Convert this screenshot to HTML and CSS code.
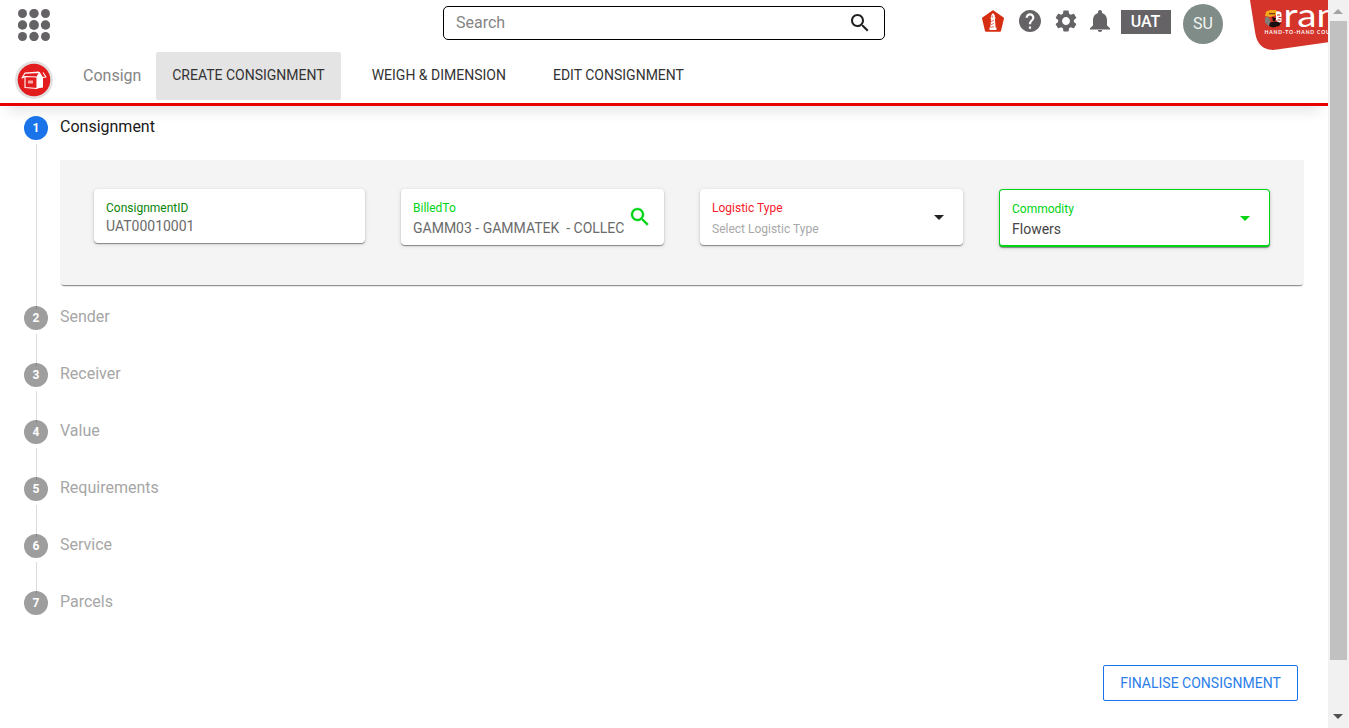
FILE: index.html
```html
<!DOCTYPE html>
<html lang="en">
<head>
<meta charset="utf-8">
<title>Create Consignment</title>
<link rel="stylesheet" href="styles.css">
</head>
<body>
<div class="app">
  <div class="page">
    <header class="header">
      <div class="topbar">
        <svg class="apps" viewBox="0 0 32 32"><g fill="#656366"><circle cx="4.5" cy="4.5" r="4.5"/><circle cx="16" cy="4.5" r="4.7"/><circle cx="27.5" cy="4.5" r="4.5"/><circle cx="4.5" cy="16" r="4.7"/><circle cx="16" cy="16" r="4.9"/><circle cx="27.5" cy="16" r="4.7"/><circle cx="4.5" cy="27.5" r="4.5"/><circle cx="16" cy="27.5" r="4.7"/><circle cx="27.5" cy="27.5" r="4.5"/></g></svg>
        <div class="search">
          <span class="search-text">Search</span>
          <svg class="icon24" viewBox="0 0 24 24"><path fill="#212121" d="M15.5 14h-.79l-.28-.27C15.41 12.59 16 11.11 16 9.5 16 5.91 13.09 3 9.5 3S3 5.91 3 9.5 5.91 16 9.5 16c1.61 0 3.09-.59 4.23-1.57l.27.28v.79l5 4.99L20.49 19l-4.99-5zm-6 0C7.01 14 5 11.99 5 9.5S7.01 5 9.5 5 14 7.01 14 9.5 11.99 14 9.5 14z"/></svg>
        </div>
        <div class="tools">
          <svg class="tool" viewBox="0 0 22 22"><path fill="#d62e12" stroke="#d62e12" stroke-width="2" stroke-linejoin="round" d="M11 1.2 21 8.3 18 20.8H4L1 8.3z"/><path fill="#fff" d="M9.2 5.2 11 3l1.8 2.2v2.3h.7v1.2h-.6l.7 8.800h.9V20H7.500v-2.500h.9l.7-8.800h-.6V7.500h.7z"/><path stroke="#d62e12" stroke-width=".7" fill="none" d="M10.300 5.500v2M9 11.500l3-1M9 14.500l3-1M9 17.500l3-1"/></svg>
          <svg class="tool" viewBox="2 2 20 20"><path fill="#656366" d="M12 2C6.480 2 2 6.480 2 12s4.480 10 10 10 10-4.480 10-10S17.520 2 12 2zm1 17h-2v-2h2v2zm2.070-7.750-.9.920C13.450 12.900 13 13.500 13 15h-2v-.5c0-1.100.45-2.100 1.170-2.830l1.240-1.260c.37-.36.590-.86.590-1.410 0-1.100-.9-2-2-2s-2 .9-2 2H8c0-2.210 1.790-4 4-4s4 1.790 4 4c0 .88-.36 1.680-.93 2.250z"/></svg>
          <svg class="tool gear" viewBox="2 2 20 20"><path fill="#656366" d="M19.140 12.940c.04-.3.060-.61.060-.94 0-.32-.02-.64-.07-.94l2.030-1.580c.18-.14.230-.41.120-.61l-1.920-3.320c-.12-.22-.37-.29-.59-.22l-2.390.960c-.5-.38-1.030-.7-1.620-.94l-.36-2.540c-.04-.24-.24-.41-.48-.41h-3.840c-.24 0-.43.170-.47.410l-.36 2.540c-.59.240-1.130.570-1.620.94l-2.390-.96c-.22-.08-.47 0-.59.220L2.740 8.870c-.12.210-.08.470.12.610l2.030 1.580c-.05.300-.09.630-.09.940s.02.640.07.940l-2.030 1.580c-.18.140-.23.410-.12.610l1.920 3.320c.12.220.37.290.59.220l2.390-.96c.5.380 1.030.7 1.620.94l.36 2.540c.05.240.24.410.48.410h3.840c.24 0 .44-.17.47-.41l.36-2.540c.59-.24 1.130-.56 1.620-.94l2.390.96c.22.080.47 0 .59-.22l1.920-3.320c.12-.22.070-.47-.12-.61l-2.010-1.580zM12 15.600c-1.980 0-3.600-1.620-3.600-3.600s1.620-3.600 3.600-3.600 3.600 1.620 3.600 3.600-1.620 3.600-3.600 3.600z"/></svg>
          <svg class="tool bell" viewBox="0 0 22 22"><path fill="#656366" d="M11 22a2.300 2.300 0 0 0 2.300-2H8.700a2.300 2.300 0 0 0 2.300 2zm7-6.500V9.800c0-3.500-1.900-6.100-5-6.900V1.900C13 .8 12.100 0 11 0S9 .8 9 1.900v1c-3.100.8-5 3.400-5 6.900v5.700L1 18.200v1.300h20v-1.300z"/></svg>
        </div>
        <span class="env">UAT</span>
        <span class="avatar">SU</span>
        <svg class="brand" viewBox="0 0 78 52">
          <path fill="#d4342a" d="M0 0h78v42.300L27 49.500C15 51.500 7 45.500 5.200 33z"/>
          <path fill="#f3a71a" d="M16 11.500 20 10h6l1 2v3l-4 1-3 1-5-1z"/><path fill="#7b3a15" d="M19 13h6v1.300h-6z"/>
          <path fill="#fff" d="M26 11.500q5.500-1 5.500 3v7l-2.500 1.500-3-3z"/><path stroke="#b9241b" d="M27 15h3M28.500 17.500h3M27.500 20h3"/>
          <path fill="#817d79" d="M15 17.500l3-1 2 3 1 4-2 3-4-4z"/>
          <path fill="#17100e" d="M20 22.500l4-1 4 .5 3 1-2 3-6 1.500-4-1.500zM22 17l4 1-1 3h-2z"/>
          <text class="brand-name" x="33.500" y="27" textLength="65" lengthAdjust="spacingAndGlyphs">ram</text>
          <text class="brand-tag" x="14.500" y="34" textLength="83">HAND-TO-HAND COURIERS</text>
        </svg>
      </div>
      <nav class="nav">
        <svg class="module" viewBox="0 0 38 38"><circle cx="19" cy="19" r="19" fill="#e1e1e1"/><circle cx="19" cy="19" r="16.300" fill="#e31d1d"/><path fill="none" stroke="#fff" stroke-width="1.100" stroke-linejoin="round" d="M10 17v9.500l12 1V16L10 15.500v2M10 15.500 7 17l3-5 14-1M22 16l2.500-4.500-14 .8M28 11.500l3 4.500-3.500.5"/><path fill="#fff" d="M22 16l3-4.500 3 4.800v10.200l-6 1z"/><path fill="#f7a9a6" d="M13 19.500h5v3h-5z"/></svg>
        <span class="module-name">Consign</span>
        <a class="tab active">CREATE CONSIGNMENT</a>
        <a class="tab">WEIGH &amp; DIMENSION</a>
        <a class="tab">EDIT CONSIGNMENT</a>
      </nav>
    </header>
    <main class="stepper">
      <section class="step current">
        <div class="rail"><span class="num">1</span><i class="line"></i></div>
        <div class="content">
          <h2 class="label">Consignment</h2>
          <div class="panel">
            <div class="field wide short"><div class="field-body"><span class="caption dark-green">ConsignmentID</span><span class="value">UAT00010001</span></div></div>
            <div class="field"><div class="field-body"><span class="caption green">BilledTo</span><span class="value">GAMM03 - GAMMATEK&nbsp; - COLLEC</span></div>
              <svg class="icon24 lookup" viewBox="0 0 24 24"><path fill="#00d415" stroke="#00d415" stroke-width=".3" d="M15.500 14h-.79l-.28-.27C15.410 12.590 16 11.110 16 9.500 16 5.910 13.090 3 9.500 3S3 5.910 3 9.500 5.910 16 9.500 16c1.610 0 3.090-.59 4.230-1.570l.27.280v.79l5 4.990L20.490 19l-4.990-5zm-6 0C7.010 14 5 11.990 5 9.500S7.010 5 9.500 5 14 7.010 14 9.500 11.990 14 9.500 14z"/></svg></div>
            <div class="field"><div class="field-body"><span class="caption red">Logistic Type</span><span class="value placeholder">Select Logistic Type</span></div>
              <svg class="caret" viewBox="0 0 10 5"><path fill="#212121" d="M0 0h10L5 5z"/></svg></div>
            <div class="field wide focused"><div class="field-body"><span class="caption green">Commodity</span><span class="value strong">Flowers</span></div>
              <svg class="caret" viewBox="0 0 10 5"><path fill="#00d415" d="M0 0h10L5 5z"/></svg></div>
          </div>
        </div>
      </section>
      <section class="step"><div class="rail"><span class="num">2</span><i class="line"></i></div><h2 class="label">Sender</h2></section>
      <section class="step"><div class="rail"><span class="num">3</span><i class="line"></i></div><h2 class="label">Receiver</h2></section>
      <section class="step"><div class="rail"><span class="num">4</span><i class="line"></i></div><h2 class="label">Value</h2></section>
      <section class="step"><div class="rail"><span class="num">5</span><i class="line"></i></div><h2 class="label">Requirements</h2></section>
      <section class="step"><div class="rail"><span class="num">6</span><i class="line"></i></div><h2 class="label">Service</h2></section>
      <section class="step"><div class="rail"><span class="num">7</span></div><h2 class="label">Parcels</h2></section>
    </main>
    <footer class="actions"><button class="finalise">FINALISE CONSIGNMENT</button></footer>
  </div>
  <aside class="scrollbar">
    <svg class="arrow" viewBox="0 0 10 5"><path fill="#a3a3a3" d="M0 5h10L5 0z"/></svg>
    <div class="thumb"></div>
    <svg class="arrow down" viewBox="0 0 10 5"><path fill="#505050" d="M0 0h10L5 5z"/></svg>
  </aside>
</div>
</body>
</html>
```

FILE: styles.css
```css
* { box-sizing: border-box; }
body { margin: 0; background: #fff; font-family: Roboto, "Liberation Sans", sans-serif; overflow: hidden; }
svg { display: block; flex: none; }

.app { display: flex; width: 1349px; height: 728px; }
.page { width: 1328px; height: 728px; display: flex; flex-direction: column; overflow: hidden; }

.header { height: 106px; flex: none; border-bottom: 3px solid #e80000; background: #fff; box-shadow: 0 12px 14px -8px rgba(0, 0, 0, .12); }
.topbar { display: flex; align-items: flex-start; height: 52px; overflow: hidden; }
.apps { width: 32px; height: 32px; margin: 9px 0 0 18px; }
.search { display: flex; align-items: center; justify-content: space-between; width: 442px; height: 34px; margin: 6px 0 0 393px; padding: 0 12px; border: 1px solid #000; border-radius: 5px; }
.search-text { margin-top: -2px; font-size: 16px; font-weight: 400; color: #858585; }
.icon24 { width: 24px; height: 24px; }
.tools { display: flex; gap: 14px; margin: 10px 0 0 97px; }
.tool { width: 22px; height: 22px; }
.tool + .tool { margin-left: 1px; }
.tools .gear { margin-left: 0; }
.tools .bell { margin-left: -2px; }
.env { width: 50px; height: 24px; margin: 10px 0 0 10px; padding-right: 1px; background: #656366; color: #fff; font-size: 16px; font-weight: 500; line-height: 23px; text-align: center; }
.avatar { width: 40px; height: 40px; margin: 4px 0 0 12px; border-radius: 50%; background: #7f8c87; color: #f2f4f3; font-size: 16px; font-weight: 400; line-height: 40px; text-align: center; }
.brand { width: 78px; height: 52px; margin-left: 27px; overflow: hidden; }
.brand-name { fill: #fff; font-family: Lato, sans-serif; font-size: 32px; font-weight: 400; }
.brand-tag { fill: #fff; font-family: Lato, sans-serif; font-size: 5px; font-weight: 700; }

.nav { display: flex; align-items: flex-start; height: 51px; }
.module { width: 38px; height: 38px; margin: 9px 0 0 15px; }
.module-name { width: 58px; margin: 0 15px 0 30px; color: #858585; font-size: 16px; font-weight: 400; line-height: 47px; }
.tab { height: 48px; padding: 0 16px 0 16.25px; margin-right: 14.75px; border-radius: 2px; color: #333; font-size: 14px; line-height: 47px; white-space: nowrap; }
.active { background: #e4e4e4; }

.stepper { padding: 10px 24px 0; }
.step { display: flex; gap: 12px; height: 57px; }
.current { height: 190px; }
.rail { display: flex; flex-direction: column; width: 24px; flex: none; }
.num { width: 24px; height: 24px; flex: none; border-radius: 50%; background: #9e9e9e; color: #fff; font-size: 12px; font-weight: 700; line-height: 24px; text-align: center; }
.current .num { background: #1a73e8; }
.line { flex: 1; width: 1px; margin: 4px 0 -3px 12px; background: rgba(0, 0, 0, .14); z-index: 1; }
.label { margin: 0; font-size: 16px; font-weight: 400; line-height: 22px; color: #a6a6a6; }
.current .label { color: #1a1a1a; }
.content { width: 1244px; }

.panel { display: flex; align-items: flex-start; gap: 36px; height: 125px; margin-top: 22px; padding: 29px 34px 0; background: #f4f4f4; border-radius: 0 0 4px 4px; box-shadow: 0 2px 1px -1px rgba(0, 0, 0, .36), 0 3px 2px -2px rgba(0, 0, 0, .2); }
.field { position: relative; display: flex; justify-content: space-between; width: 263px; height: 56px; padding: 11px 12px 0; background: #fff; border-radius: 4px; box-shadow: 0 1px 1px rgba(0, 0, 0, .4), 0 1px 4px rgba(0, 0, 0, .15); }
.wide { width: 271px; }
.short { height: 54px; }
.focused { height: 58px; border: 1px solid #00d415; border-bottom-width: 2px; }
.focused.field { padding: 11px 11px 0 12px; }
.field-body { display: flex; flex-direction: column; white-space: nowrap; }
.caption { font-size: 12px; line-height: 16px; }
.value { margin-top: 3px; font-size: 14px; line-height: 18px; color: #6b6b6b; }
.short .value { margin-top: 1px; }
.strong { color: #444; }
.value.placeholder { color: #a8a8a8; font-size: 12px; line-height: 20px; }
.green { color: #00d415; }
.dark-green { color: #0a850a; }
.red { color: #f5202a; }
.lookup { margin: 5px 0 0 -12px; }
.caret { width: 10px; height: 5px; margin: 15px 7px 0 0; }
.focused .caret { margin-right: 8px; }

.actions { display: flex; justify-content: flex-end; margin-top: 17px; padding-right: 30px; }
.finalise { width: 195px; height: 36px; padding: 0; border: 1px solid #1a73e8; border-radius: 2px; background: #fff; color: #2b7eea; font: 400 14px Roboto, sans-serif; }

.scrollbar { display: flex; flex-direction: column; align-items: center; width: 21px; height: 728px; background: #f1f1f1; }
.arrow { width: 10px; height: 5px; margin-top: 9px; margin-right: 2px; }
.thumb { width: 17px; height: 639px; margin-top: 7px; background: #c1c1c1; }
.down { margin-top: 54px; }
```
